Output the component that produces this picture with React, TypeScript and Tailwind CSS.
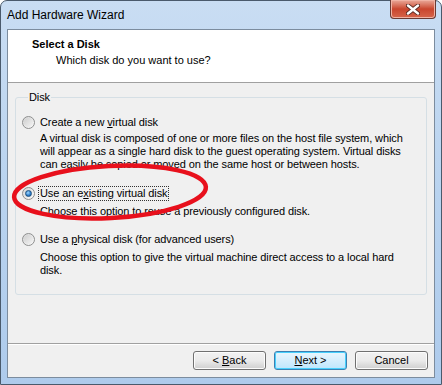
import * as React from "react";

const FONT = "font-['Liberation_Sans',Arial,sans-serif]";

function Radio({ checked }: { checked?: boolean }) {
  return (
    <span className="flex size-[13px] shrink-0 items-center justify-center rounded-full border border-[#8e8f8f] bg-gradient-to-br from-[#d6d6d6] to-[#fbfbfb]">
      {checked ? (
        <span className="size-[7px] rounded-full border border-[#1c5180] bg-[radial-gradient(circle_at_40%_35%,#9fd8ff,#2a7ac8_60%,#0f4f8f)]" />
      ) : (
        <span className="size-[9px] rounded-full bg-gradient-to-br from-[#cfcfcf] to-[#f4f4f4]" />
      )}
    </span>
  );
}

function Option({
  label,
  checked,
  focused,
  children,
}: {
  label: React.ReactNode;
  checked?: boolean;
  focused?: boolean;
  children: React.ReactNode;
}) {
  return (
    <div className="flex flex-col">
      <div className="flex h-[15px] items-center gap-[3px]">
        <Radio checked={checked} />
        <span
          className={
            focused
              ? "border border-dotted border-[#333] px-[1px] leading-[13px]"
              : "border border-transparent px-[1px] leading-[13px]"
          }
        >
          {label}
        </span>
      </div>
      <p className="pl-[18px] leading-[13px]">{children}</p>
    </div>
  );
}

function WinButton({ children, def }: { children: React.ReactNode; def?: boolean }) {
  return (
    <button
      className={
        def
          ? "h-[19px] w-[73px] rounded-[3px] border border-[#3c7fb1] bg-gradient-to-b from-[#eaf6fd] to-[#bee6fd] text-[11px] leading-none text-black shadow-[inset_0_0_0_1px_#48d0fd]"
          : "h-[19px] w-[73px] rounded-[3px] border border-[#707070] bg-gradient-to-b from-[#f2f2f2] via-[#ebebeb] to-[#cfcfcf] text-[11px] leading-none text-black shadow-[inset_0_0_0_1px_#fcfcfc]"
      }
    >
      {children}
    </button>
  );
}

export default function App() {
  return (
    <div
      className={`relative flex h-[385px] w-[442px] flex-col rounded-t-[7px] border border-[#4a5a6c] bg-gradient-to-b from-[#c9ddf3] via-[#b9d3ef] to-[#aecbec] px-[6px] pb-[6px] text-[11px] text-black ${FONT}`}
    >
      {/* title bar */}
      <div className="flex h-[28px] shrink-0 items-start justify-between">
        <span className="mt-[7px] text-[12px] leading-[15px] text-black">Add Hardware Wizard</span>
        <button className="-mt-px mr-[-1px] flex h-[19px] w-[46px] items-center justify-center rounded-b-[4px] border border-t-0 border-[#6a3a33] bg-gradient-to-b from-[#e9a99a] via-[#c9452d] to-[#d6654b] shadow-[inset_0_0_0_1px_#f1b3a4]">
          <svg width="14" height="11" viewBox="0 0 14 11">
            <path
              d="M2 1.5 L12 9.5 M12 1.5 L2 9.5"
              stroke="#5a2a22"
              strokeWidth="4.2"
              strokeLinecap="round"
            />
            <path d="M2 1.5 L12 9.5 M12 1.5 L2 9.5" stroke="#ffffff" strokeWidth="2.4" strokeLinecap="round" />
          </svg>
        </button>
      </div>

      {/* client */}
      <div className="flex flex-1 flex-col border border-[#7c8c9e] bg-[#f0f0f0]">
        <div className="h-[53px] shrink-0 border-b border-[#a0a0a0] bg-white pt-[7px] pl-[24px]">
          <div className="text-[11px] leading-[14px] font-bold">Select a Disk</div>
          <div className="mt-[2px] pl-[24px] leading-[14px]">Which disk do you want to use?</div>
        </div>

        <div className="flex-1 px-[7px] pt-[8px]">
          <fieldset className="h-[204px] rounded-[3px] border border-[#d5dfe5] pt-[16px] pl-[6px] tracking-[-0.1px]">
            <legend className="ml-[6px] px-[1px] leading-[13px]">Disk</legend>
            <div className="-mt-[5px] flex flex-col">
              <Option
                label={
                  <>
                    Create a new <u>v</u>irtual disk
                  </>
                }
              >
                <span className="mt-[2px] block">
                  A virtual disk is composed of one or more files on the host file system, which
                  <br />
                  will appear as a single hard disk to the guest operating system. Virtual disks
                  <br />
                  can easily be copied or moved on the same host or between hosts.
                </span>
              </Option>
              <div className="mt-[15px]">
                <Option
                  checked
                  focused
                  label={
                    <>
                      Use an e<u>x</u>isting virtual disk
                    </>
                  }
                >
                  <span className="mt-[4px] block">Choose this option to reuse a previously configured disk.</span>
                </Option>
              </div>
              <div className="mt-[14px]">
                <Option
                  label={
                    <>
                      Use a <u>p</u>hysical disk (for advanced users)
                    </>
                  }
                >
                  <span className="mt-[4px] block">
                    Choose this option to give the virtual machine direct access to a local hard
                    <br />
                    disk.
                  </span>
                </Option>
              </div>
            </div>
          </fieldset>
        </div>

        <div className="h-px shrink-0 bg-[#a0a0a0]" />
        <div className="h-px shrink-0 bg-white" />
        <div className="flex h-[32px] shrink-0 items-start justify-end gap-[8px] pt-[6px] pr-[6px]">
          <WinButton>
            &lt; <u>B</u>ack
          </WinButton>
          <WinButton def>
            <u>N</u>ext &gt;
          </WinButton>
          <WinButton>Cancel</WinButton>
        </div>
      </div>

      {/* hand-drawn highlight */}
      <svg className="pointer-events-none absolute top-[-1px] left-[-1px]" width="442" height="385">
        <ellipse
          cx="110"
          cy="192"
          rx="96"
          ry="26"
          transform="rotate(-3 110 192)"
          fill="none"
          stroke="#e8101c"
          strokeWidth="4.5"
        />
      </svg>
    </div>
  );
}
